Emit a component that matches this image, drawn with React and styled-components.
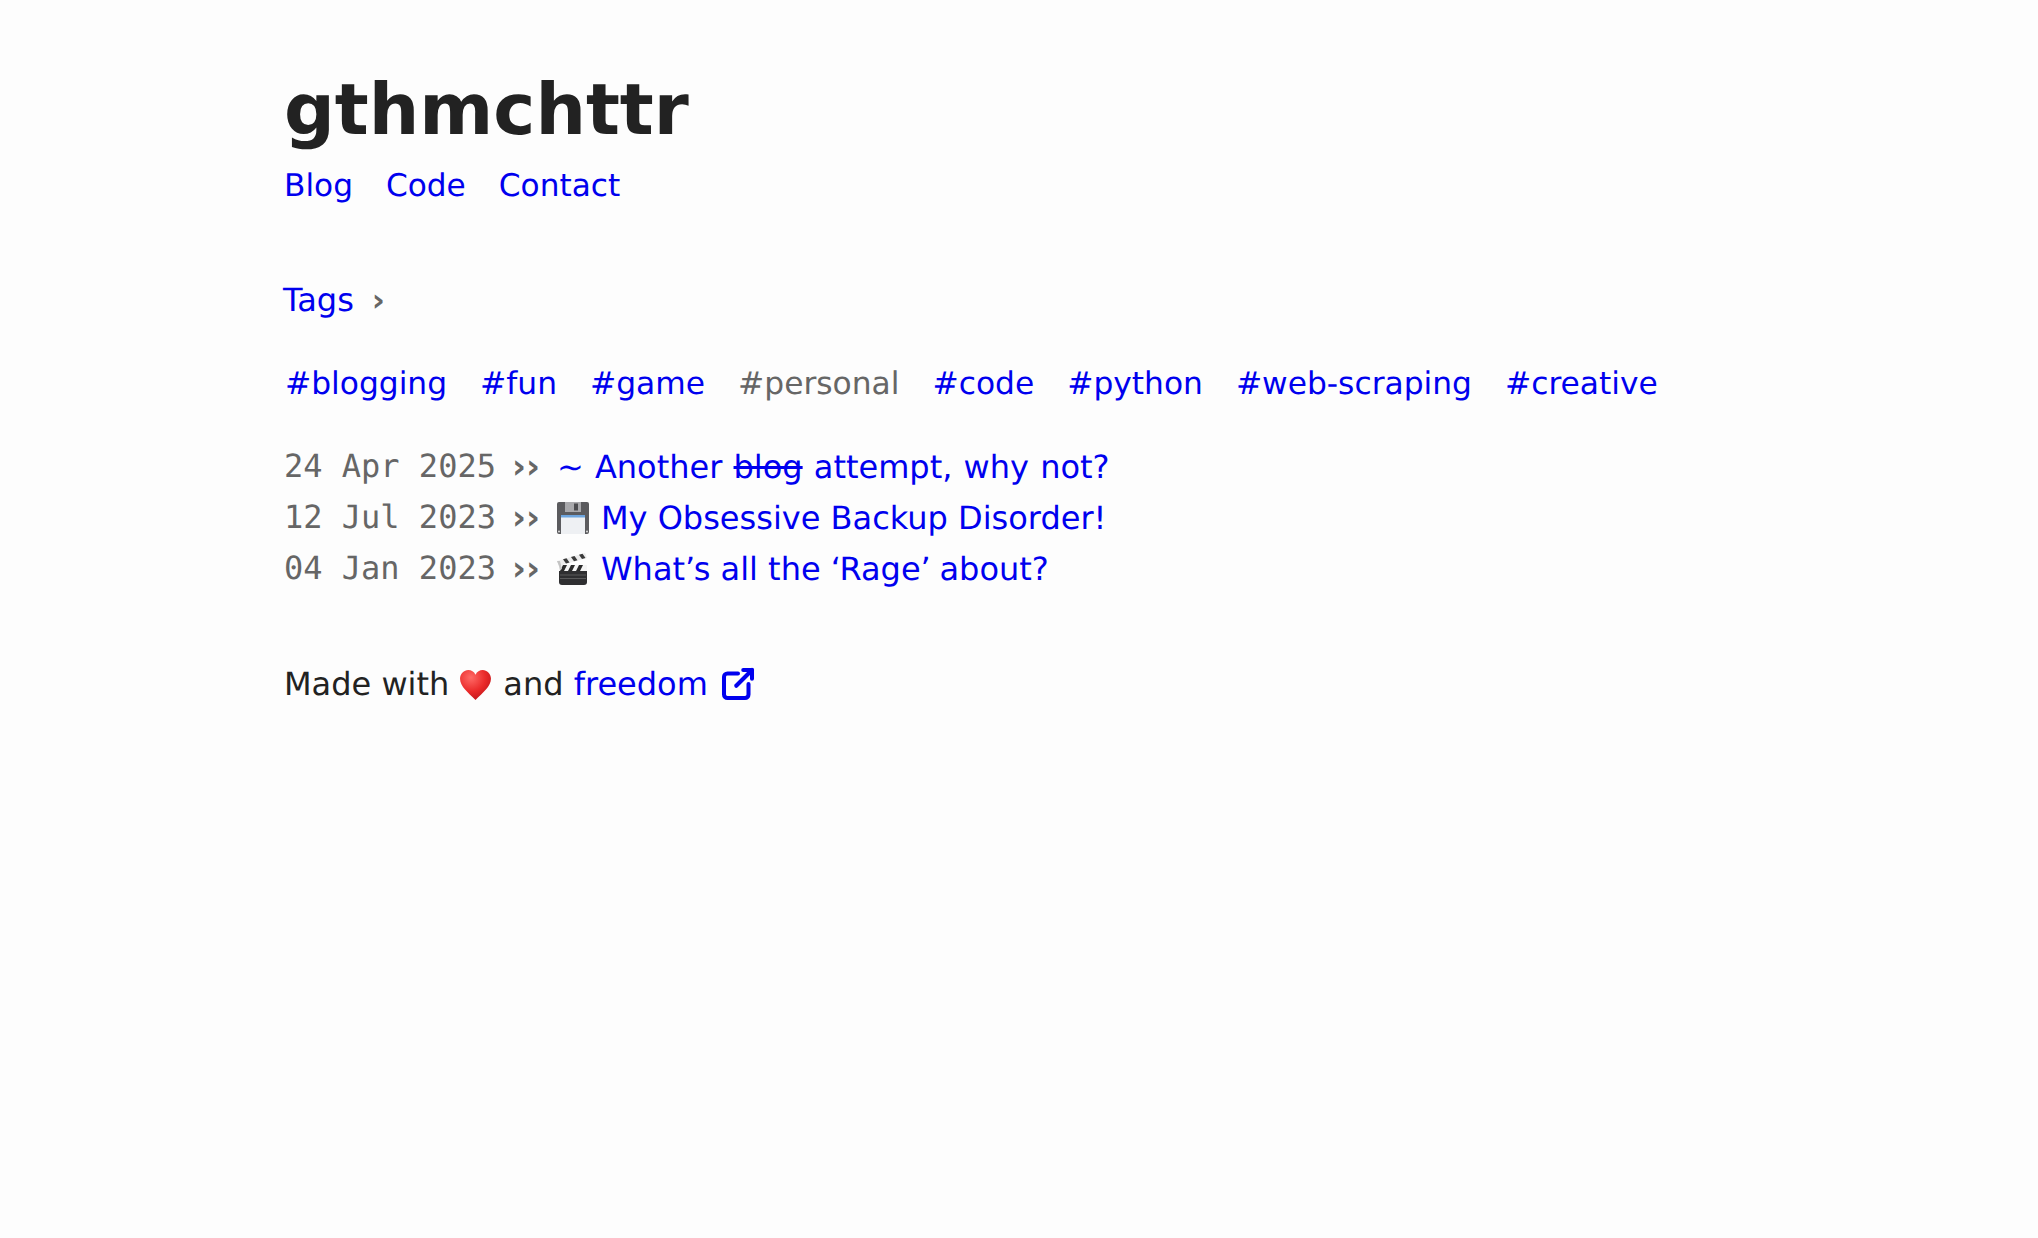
import React from 'react';
import styled, { createGlobalStyle } from 'styled-components';

const GlobalStyle = createGlobalStyle`
  html, body {
    margin: 0;
    padding: 0;
    background: #fdfdfd;
  }
  body {
    font-family: "DejaVu Sans", Verdana, sans-serif;
    font-size: 32px;
    color: #222;
    text-rendering: geometricPrecision;
  }
`;

const Page = styled.div`
  padding: 64px 0 0 284px;
`;

const Title = styled.h1`
  margin: 0;
  font-size: 71px;
  font-weight: 700;
  line-height: 92px;
  color: #222;
`;

const Nav = styled.nav`
  display: flex;
  gap: 33px;
  margin-top: 6px;
  font-size: 31.2px;
  line-height: 48px;
`;

const Link = styled.a`
  color: #0000ee;
  text-decoration: none;
  word-spacing: ${props => (props.$loose ? '1px' : '0')};
`;

const TagsToggle = styled.div`
  margin-top: 65px;
  margin-left: -1px;
  display: flex;
  align-items: center;
  gap: 18px;
  line-height: 50px;
`;

const Chevron = styled.span`
  color: #666;
  font-weight: 700;
`;

const TagList = styled.ul`
  display: flex;
  gap: 33px;
  margin: 34px 0 0;
  padding: 0 0 0 1px;
  font-size: 31.3px;
  list-style: none;
  line-height: 50px;
`;

const Tag = styled.li`
  color: ${props => (props.$muted ? '#666' : '#0000ee')};
`;

const Posts = styled.ul`
  margin: 32px 0 0;
  padding: 0;
  list-style: none;
`;

const Post = styled.li`
  display: flex;
  align-items: center;
  height: 51px;
`;

const PostDate = styled.time`
  font-family: "DejaVu Sans Mono", monospace;
  font-size: 32px;
  margin-bottom: 2px;
  color: #666;
`;

const Sep = styled.span`
  margin: 0 17px 0 16px;
  color: #666;
  font-size: 34px;
  font-weight: 700;
`;

const PostIcon = styled.svg`
  width: 32px;
  height: 32px;
  margin-right: 12px;
  flex: none;
`;

const Quote = styled.span`
  letter-spacing: -1.5px;
`;

const Footer = styled.footer`
  display: flex;
  align-items: center;
  margin-top: 65px;
  line-height: 50px;
  color: #222;
  white-space: pre;
`;

const Heart = styled.svg`
  width: 33px;
  height: 33px;
  margin: 0 11px 0 10px;
`;

const ExternalIcon = styled.svg`
  width: 42px;
  height: 42px;
  margin-left: 9px;
  fill: none;
  stroke: #0000ee;
  stroke-width: 2.3;
  stroke-linecap: round;
  stroke-linejoin: round;
`;

const FloppyIcon = () => (
  <PostIcon viewBox="0 0 32 32">
    <rect x="0" y="0" width="32" height="32" rx="2" fill="#5b5b5e" />
    <rect x="8" y="0" width="16" height="10" fill="#a9a9ac" />
    <rect x="17" y="1.5" width="4" height="7" fill="#4c4c4f" />
    <rect x="4" y="13" width="24" height="19" fill="#eef0f3" />
    <rect x="4" y="13" width="24" height="2.5" fill="#6ea5de" />
    <circle cx="2" cy="29.5" r="1" fill="#ddd" />
    <circle cx="30" cy="29.5" r="1" fill="#ddd" />
  </PostIcon>
);

const ClapperIcon = () => (
  <PostIcon viewBox="0 0 32 32">
    <path d="M2 17h28v12a3 3 0 0 1-3 3H5a3 3 0 0 1-3-3z" fill="#2f2f31" />
    <path d="M3 22h26M3 25.5h26" stroke="#666" strokeWidth="0.8" />
    <rect x="2" y="12" width="28" height="6" fill="#f4f4f4" />
    <path d="M6 12h4l-3 6H3zM14 12h4l-3 6h-4zM22 12h4l-3 6h-4z" fill="#2a2a2a" />
    <path d="M0 8L28 0l2 5L2 13z" fill="#ececec" />
    <path d="M6 6.300l3.500-1 3 4.200-3.500 1zM14 4l3.500-1 3 4.200-3.500 1zM22 1.800l3.500-1 3 4.200-3.500 1z" fill="#3a3a3a" />
    <path d="M0 8l2 5 1 4 2-1-2-8z" fill="#c4c4c4" />
  </PostIcon>
);

const posts = [
  { date: '24 Apr 2025', loose: true, title: <>~ Another <s>blog</s> attempt, why not?</> },
  { date: '12 Jul 2023', icon: <FloppyIcon />, title: 'My Obsessive Backup Disorder!' },
  {
    date: '04 Jan 2023',
    icon: <ClapperIcon />,
    title: <>What<Quote>’</Quote>s all the <Quote>‘</Quote>Rage<Quote>’</Quote> about?</>,
  },
];

const tags = ['blogging', 'fun', 'game', 'personal', 'code', 'python', 'web-scraping', 'creative'];

const App = () => (
  <Page>
    <GlobalStyle />
    <header>
      <Title>gthmchttr</Title>
      <Nav>
        <Link href="#">Blog</Link>
        <Link href="#">Code</Link>
        <Link href="#">Contact</Link>
      </Nav>
    </header>
    <main>
      <TagsToggle>
        <Link href="#">Tags</Link>
        <Chevron>›</Chevron>
      </TagsToggle>
      <TagList>
        {tags.map(tag => (
          <Tag key={tag} $muted={tag === 'personal'}>#{tag}</Tag>
        ))}
      </TagList>
      <Posts>
        {posts.map(post => (
          <Post key={post.date}>
            <PostDate>{post.date}</PostDate>
            <Sep>››</Sep>
            {post.icon}
            <Link href="#" $loose={post.loose}>{post.title}</Link>
          </Post>
        ))}
      </Posts>
    </main>
    <Footer>
      Made with
      <Heart viewBox="0 0 32 32">
        <defs>
          <radialGradient id="heartFill" cx="0.35" cy="0.25" r="0.85">
            <stop offset="0" stopColor="#ff6a66" />
            <stop offset="0.55" stopColor="#ea2a2a" />
            <stop offset="1" stopColor="#b81218" />
          </radialGradient>
        </defs>
        <path d="M16 31C9 24 1 18 1 10.500C1 5.500 5 2 9 2c3 0 5.500 1.500 7 4.500C17.500 3.500 20 2 23 2c4 0 8 3.500 8 8.500C31 18 23 24 16 31z" fill="url(#heartFill)" />
      </Heart>
      and <Link href="#">freedom</Link>
      <ExternalIcon viewBox="0 0 24 24">
        <path d="M12 6h-6a2 2 0 0 0 -2 2v10a2 2 0 0 0 2 2h10a2 2 0 0 0 2 -2v-6" />
        <path d="M11 13l9 -9" />
        <path d="M15 4h5v5" />
      </ExternalIcon>
    </Footer>
  </Page>
);

export default App;
